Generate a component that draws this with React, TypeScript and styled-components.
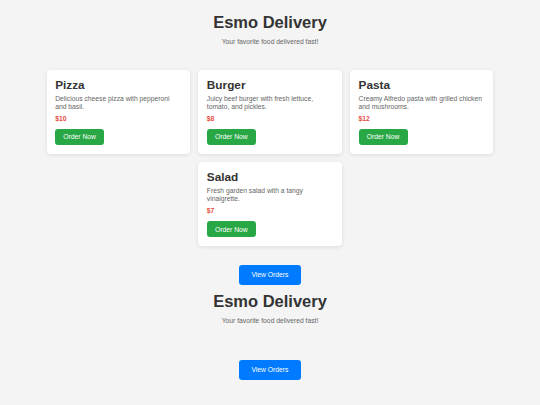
import styled, { createGlobalStyle } from 'styled-components';

// Menu data
type MenuItem = {
	name: string;
	description: string;
	price: number;
};

const menu: MenuItem[] = [
	{ name: 'Pizza', description: 'Delicious cheese pizza with pepperoni and basil.', price: 10 },
	{ name: 'Burger', description: 'Juicy beef burger with fresh lettuce, tomato, and pickles.', price: 8 },
	{ name: 'Pasta', description: 'Creamy Alfredo pasta with grilled chicken and mushrooms.', price: 12 },
	{ name: 'Salad', description: 'Fresh garden salad with a tangy vinaigrette.', price: 7 },
];

const GlobalStyle = createGlobalStyle`
	html, body {
		margin: 0;
		padding: 0;
		background-color: #f4f4f4;
		font-family: 'Liberation Sans', Arial, sans-serif;
	}
`;

const Page = styled.div`
	padding-top: 5.5px;
`;

const Section = styled.section`
	display: flex;
	flex-direction: column;
	align-items: center;
`;

const Title = styled.h1`
	margin: 7px 0 0;
	font-size: 16.5px;
	font-weight: 700;
	line-height: 19.5px;
	color: #333333;
`;

const Subtitle = styled.p`
	margin: 5.5px 0 0;
	font-size: 6.75px;
	line-height: 7.5px;
	color: #666666;
`;

const MenuGrid = styled.div`
	display: flex;
	flex-wrap: wrap;
	justify-content: center;
	width: 456px;
	margin-top: 20.7px;
`;

const Card = styled.div`
	box-sizing: border-box;
	width: 143.3px;
	margin: 4.2px;
	padding: 8px 8.5px 9px;
	background-color: #ffffff;
	border-radius: 4px;
	box-shadow: 0 1px 4px rgba(0, 0, 0, 0.1);
`;

const ItemName = styled.h2`
	margin: 0;
	font-size: 11.8px;
	font-weight: 700;
	line-height: 14px;
	color: #333333;
`;

const ItemDescription = styled.p`
	margin: 3px 0 0;
	font-size: 6.75px;
	line-height: 8px;
	color: #666666;
`;

const Price = styled.p`
	margin: 4px 0 0;
	font-size: 6.75px;
	font-weight: 700;
	line-height: 8px;
	color: #e74c3c;
`;

const Button = styled.button<{ $variant: 'order' | 'view' }>`
	display: block;
	border: none;
	border-radius: 3px;
	font-family: 'Liberation Sans', Arial, sans-serif;
	font-size: 6.75px;
	color: #ffffff;
	cursor: pointer;
	background-color: ${({ $variant }) => ($variant === 'order' ? '#28a745' : '#007bff')};
	height: ${({ $variant }) => ($variant === 'order' ? '16px' : '20px')};
	width: ${({ $variant }) => ($variant === 'order' ? '49px' : '62px')};
	margin-top: ${({ $variant }) => ($variant === 'order' ? '6px' : '14.5px')};
	padding: 0;
`;

const Header = () => (
	<>
		<Title>Esmo Delivery</Title>
		<Subtitle>Your favorite food delivered fast!</Subtitle>
	</>
);

const App = () => {
	return (
		<Page>
			<GlobalStyle />
			<Section>
				<Header />
				<MenuGrid>
					{menu.map((item) => (
						<Card key={item.name}>
							<ItemName>{item.name}</ItemName>
							<ItemDescription>{item.description}</ItemDescription>
							<Price>${item.price}</Price>
							<Button $variant="order">Order Now</Button>
						</Card>
					))}
				</MenuGrid>
				<Button $variant="view">View Orders</Button>
			</Section>

			{/* Orders view renders the header again with an empty list */}
			<Section>
				<Header />
				<MenuGrid />
				<Button $variant="view">View Orders</Button>
			</Section>
		</Page>
	);
};

export default App;
